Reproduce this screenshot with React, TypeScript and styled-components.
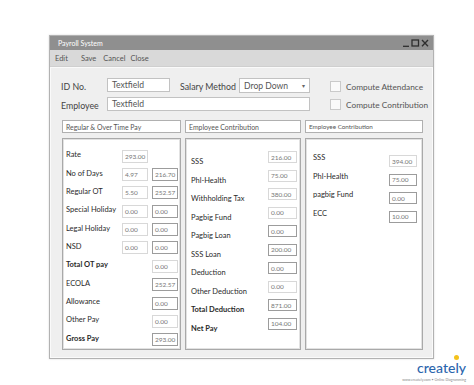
import styled, { createGlobalStyle } from "styled-components";

const GlobalStyle = createGlobalStyle`
  html, body {
    margin: 0;
    padding: 0;
    background: #fff;
  }
  body {
    font-family: Lato, "Open Sans", sans-serif;
    color: #333;
    -webkit-font-smoothing: antialiased;
  }
`;

type PayRow = { label: string; a?: string; b?: string; bold?: boolean; bDim?: boolean };
type ValRow = { label: string; value: string; bold?: boolean; dim?: boolean };

const payRows: PayRow[] = [
  { label: "Rate", a: "293.00" },
  { label: "No of Days", a: "4.97", b: "216.70" },
  { label: "Regular OT", a: "5.50", b: "252.57" },
  { label: "Special Holiday", a: "0.00", b: "0.00" },
  { label: "Legal Holiday", a: "0.00", b: "0.00" },
  { label: "NSD", a: "0.00", b: "0.00" },
  { label: "Total OT pay", b: "0.00", bold: true, bDim: true },
  { label: "ECOLA", b: "252.57" },
  { label: "Allowance", b: "0.00" },
  { label: "Other Pay", b: "0.00", bDim: true },
  { label: "Gross Pay", b: "293.00", bold: true },
];

const contribRows: ValRow[] = [
  { label: "SSS", value: "216.00", dim: true },
  { label: "Phl-Health", value: "75.00", dim: true },
  { label: "Withholding Tax", value: "380.00", dim: true },
  { label: "Pagbig Fund", value: "0.00", dim: true },
  { label: "Pagbig Loan", value: "0.00" },
  { label: "SSS Loan", value: "200.00" },
  { label: "Deduction", value: "0.00" },
  { label: "Other Deduction", value: "0.00", dim: true },
  { label: "Total Deduction", value: "871.00", bold: true },
  { label: "Net Pay", value: "104.00", bold: true },
];

const employerRows: ValRow[] = [
  { label: "SSS", value: "394.00", dim: true },
  { label: "Phl-Health", value: "75.00" },
  { label: "pagbig Fund", value: "0.00" },
  { label: "ECC", value: "10.00" },
];

const WindowControls = () => (
  <svg width="26" height="8" viewBox="0 0 26 8" fill="none" stroke="#2e2e2e" strokeWidth="1.3">
    <line x1="0" y1="7.3" x2="6" y2="7.3" />
    <rect x="9" y="1" width="6.5" height="6" />
    <line x1="19" y1="1" x2="25" y2="7.3" />
    <line x1="25" y1="1" x2="19" y2="7.3" />
  </svg>
);

export default function App() {
  return (
    <Page>
      <GlobalStyle />
      <Window>
        <TitleBar>
          <span>Payroll System</span>
          <WindowControls />
        </TitleBar>
        <MenuBar>
          <MenuItem $gap={13}>Edit</MenuItem>
          <MenuItem $gap={7}>Save</MenuItem>
          <MenuItem $gap={5}>Cancel</MenuItem>
          <MenuItem>Close</MenuItem>
        </MenuBar>

        <Body>
          <Form>
            <Fields>
              <FieldRow>
                <FieldLabel $width={46}>ID No.</FieldLabel>
                <TextField $width={63}>Textfield</TextField>
                <FieldLabel $width={59} $indent={10}>Salary Method</FieldLabel>
                <DropDown>
                  <span>Drop Down</span>
                  <Caret>▾</Caret>
                </DropDown>
              </FieldRow>
              <FieldRow>
                <FieldLabel $width={46}>Employee</FieldLabel>
                <TextField>Textfield</TextField>
              </FieldRow>
            </Fields>
            <Checks>
              <CheckRow>
                <CheckBox />
                Compute Attendance
              </CheckRow>
              <CheckRow>
                <CheckBox />
                Compute Contribution
              </CheckRow>
            </Checks>
          </Form>

          <Sections>
            <SectionHeader>Regular &amp; Over Time Pay</SectionHeader>
            <SectionHeader>Employee Contribution</SectionHeader>
            <SectionHeader $small>Employee Contribution</SectionHeader>

            <Panel $pad="8px 0 0 3px">
              {payRows.map((r) => (
                <PayLine key={r.label}>
                  <RowLabel $bold={r.bold}>{r.label}</RowLabel>
                  {r.a ? <ValueBox $dim $h={13}>{r.a}</ValueBox> : <span />}
                  {r.b ? <ValueBox $dim={r.bDim} $h={13}>{r.b}</ValueBox> : <span />}
                </PayLine>
              ))}
            </Panel>

            <Panel $pad="12px 0 0 5px">
              {contribRows.map((r) => (
                <StaggerLine key={r.label}>
                  <RowLabel $bold={r.bold} $drop={6}>{r.label}</RowLabel>
                  <ValueBox $dim={r.dim} $h={12}>{r.value}</ValueBox>
                </StaggerLine>
              ))}
            </Panel>

            <Panel $pad="13px 0 0 7px">
              {employerRows.map((r) => (
                <EmployerLine key={r.label}>
                  <RowLabel $bold={r.bold} $drop={-3}>{r.label}</RowLabel>
                  <ValueBox $dim={r.dim} $h={12}>{r.value}</ValueBox>
                </EmployerLine>
              ))}
            </Panel>
          </Sections>
        </Body>
      </Window>

      <Footer>
        <Logo>
          create<Bulb>l</Bulb>y
        </Logo>
        <Tagline>www.creately.com • Online Diagramming</Tagline>
      </Footer>
    </Page>
  );
}

const Page = styled.div`
  width: 474px;
  height: 385px;
  box-sizing: border-box;
  padding: 35px 0 0 49px;
  display: flex;
  flex-direction: column;
  overflow: hidden;
`;

const Window = styled.div`
  width: 385px;
  box-sizing: border-box;
  border: 1px solid #b2b2b2;
  box-shadow: 0 0 2px rgba(0, 0, 0, 0.15);
  display: flex;
  flex-direction: column;
  background: #eeeeee;
`;

const TitleBar = styled.div`
  height: 14px;
  background: #8f8f8f;
  color: #fff;
  font-size: 7px;
  display: flex;
  align-items: center;
  justify-content: space-between;
  padding: 0 4px 0 8px;
`;

const MenuBar = styled.div`
  height: 16px;
  background: #d9d9d9;
  border-bottom: 1px solid #cfcfcf;
  display: flex;
  align-items: center;
  padding-left: 5px;
  font-size: 7.5px;
  color: #555;
`;

const MenuItem = styled.span<{ $gap?: number }>`
  margin-right: ${({ $gap }) => $gap ?? 0}px;
`;

const Body = styled.div`
  border: 1px solid #fafafa;
  background: #efefef;
  padding: 10px 9px 7px 10px;
`;

const Form = styled.div`
  display: flex;
`;

const Fields = styled.div`
  width: 251px;
  display: flex;
  flex-direction: column;
  gap: 5px;
`;

const FieldRow = styled.div`
  display: flex;
  align-items: center;
  height: 14px;
`;

const FieldLabel = styled.span<{ $width: number; $indent?: number }>`
  width: ${({ $width }) => $width}px;
  margin-left: ${({ $indent }) => $indent ?? 0}px;
  flex-shrink: 0;
  font-size: 8.8px;
  color: #444;
  padding-top: 3px;
  white-space: nowrap;
`;

const TextField = styled.div<{ $width?: number }>`
  ${({ $width }) => ($width ? `width: ${$width}px;` : "flex: 1;")}
  height: 14px;
  box-sizing: border-box;
  border: 1px solid #c2c2c2;
  background: #fff;
  font-size: 8.6px;
  color: #555;
  padding-left: 4px;
  display: flex;
  align-items: center;
`;

const DropDown = styled(TextField)`
  width: 71px;
  height: 15px;
  margin-top: 1px;
  justify-content: space-between;
  padding-right: 4px;
`;

const Caret = styled.span`
  font-size: 6px;
  color: #666;
`;

const Checks = styled.div`
  margin-left: 20px;
  padding-top: 3px;
  display: flex;
  flex-direction: column;
  gap: 7px;
`;

const CheckRow = styled.div`
  display: flex;
  align-items: center;
  gap: 5px;
  height: 11px;
  font-size: 8.3px;
  color: #555;
  white-space: nowrap;
`;

const CheckBox = styled.span`
  width: 11px;
  height: 11px;
  box-sizing: border-box;
  border: 1px solid #cacaca;
  background: #fafafa;
`;

const Sections = styled.div`
  margin: 9px 0 0 1px;
  display: grid;
  grid-template-columns: 119px 116px 118px;
  grid-template-rows: 13px 212px;
  column-gap: 4px;
  row-gap: 5px;
`;

const SectionHeader = styled.div<{ $small?: boolean }>`
  box-sizing: border-box;
  border: 1px solid #b0b0b0;
  background: #fff;
  font-size: ${({ $small }) => ($small ? 6.3 : 6.9)}px;
  color: #555;
  padding-left: 3px;
  display: flex;
  align-items: center;
  white-space: nowrap;
`;

const Panel = styled.div<{ $pad: string }>`
  box-sizing: border-box;
  border: 1px solid #a9a9a9;
  box-shadow: inset 0 0 0 1px #e2e2e2;
  background: #fff;
  padding: ${({ $pad }) => $pad};
  display: flex;
  flex-direction: column;
`;

const PayLine = styled.div`
  display: grid;
  grid-template-columns: 52px 26px 26px;
  column-gap: 4px;
  align-items: center;
  height: 18.5px;
`;

const StaggerLine = styled.div`
  display: grid;
  grid-template-columns: 77px 29px;
  align-items: start;
  height: 18.5px;
`;

const EmployerLine = styled.div`
  display: grid;
  grid-template-columns: 76px 28px;
  align-items: center;
  height: 18.5px;
`;

const RowLabel = styled.span<{ $bold?: boolean; $drop?: number }>`
  font-size: 7.5px;
  line-height: 10px;
  font-weight: ${({ $bold }) => ($bold ? 700 : 400)};
  color: #2a2a2a;
  white-space: nowrap;
  position: relative;
  top: ${({ $drop }) => $drop ?? -1}px;
`;

const ValueBox = styled.div<{ $dim?: boolean; $h: number }>`
  height: ${({ $h }) => $h}px;
  box-sizing: border-box;
  border: 1px solid ${({ $dim }) => ($dim ? "#d8d8d8" : "#9c9c9c")};
  background: #fff;
  font-size: 6.5px;
  color: #777;
  padding-left: 2px;
  display: flex;
  align-items: center;
`;

const Footer = styled.div`
  align-self: flex-end;
  margin-right: 8px;
  display: flex;
  flex-direction: column;
  align-items: flex-end;
`;

const Logo = styled.div`
  font-size: 14px;
  line-height: 14px;
  font-weight: 500;
  color: #2c66ad;
  margin-top: 2px;
`;

const Bulb = styled.span`
  position: relative;

  &::before {
    content: "";
    position: absolute;
    left: -1px;
    top: -4px;
    width: 5px;
    height: 5px;
    border-radius: 50%;
    background: #f4c21c;
  }
`;

const Tagline = styled.div`
  font-size: 3.5px;
  color: #888;
  margin-top: 3px;
  white-space: nowrap;
`;
